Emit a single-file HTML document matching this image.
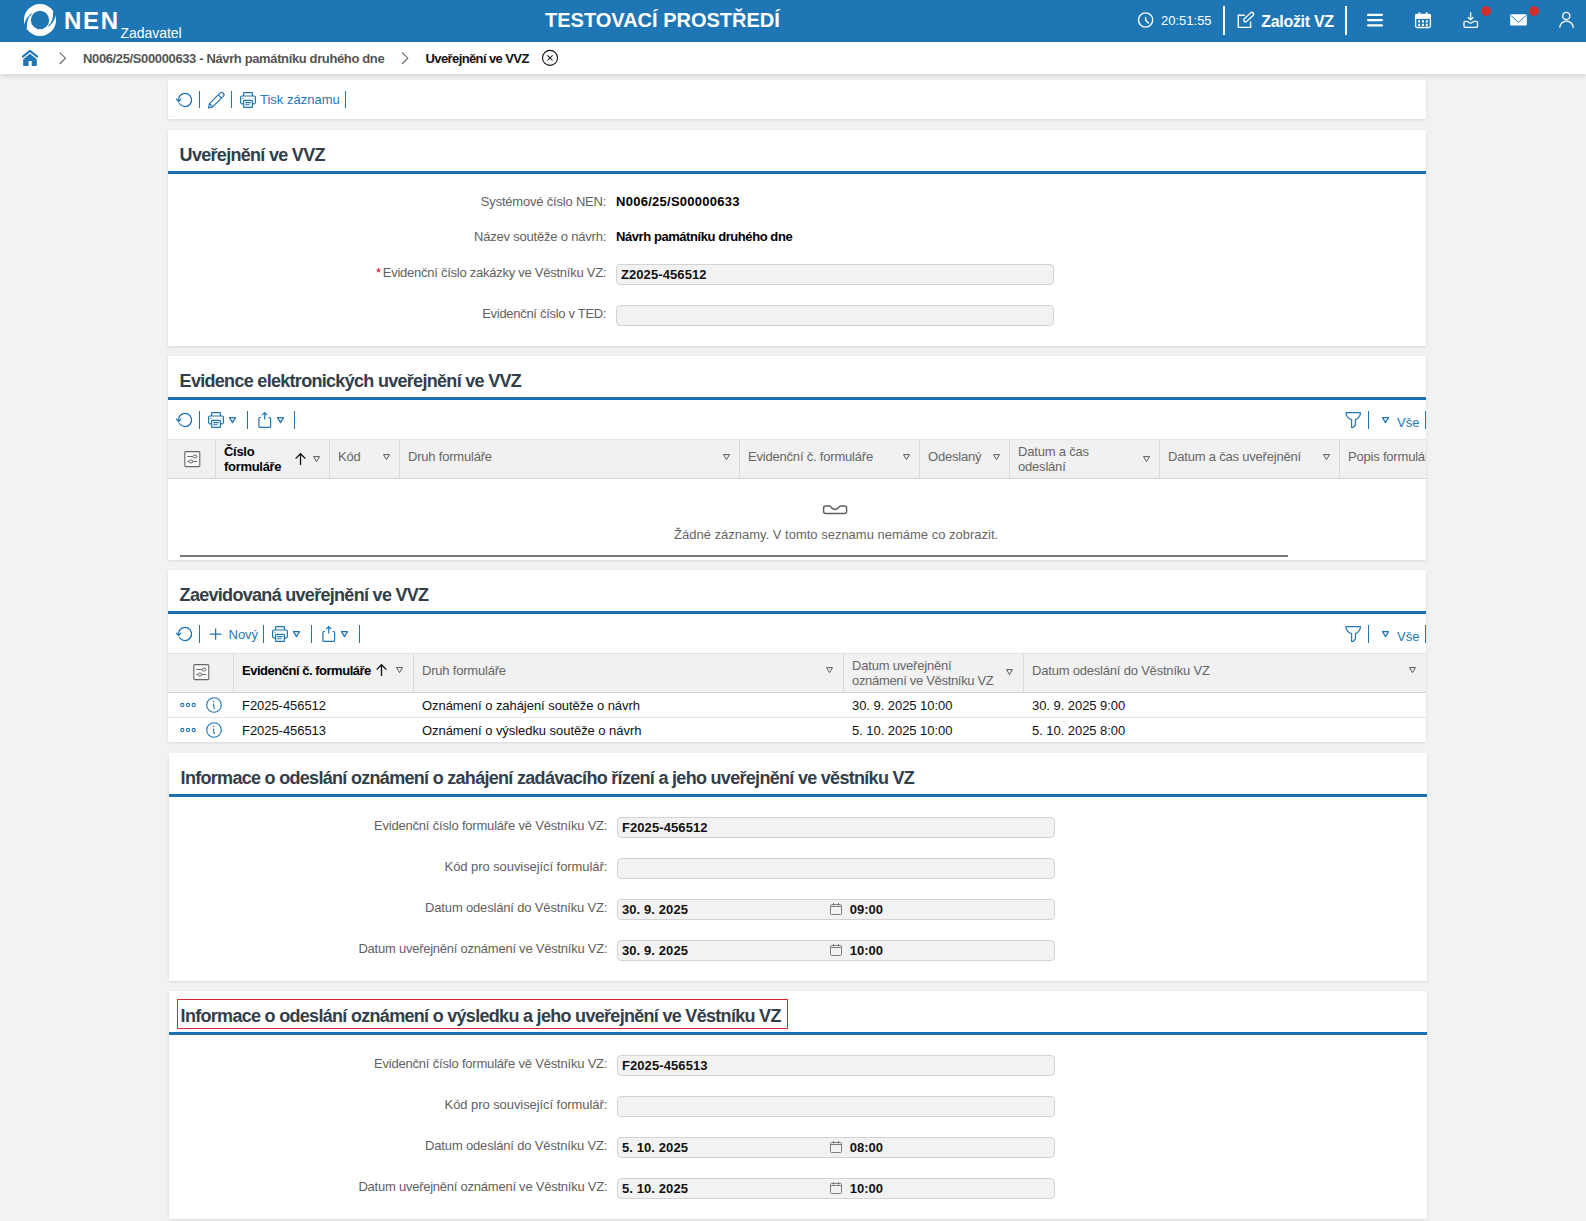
<!DOCTYPE html><html><head><meta charset="utf-8"><style>
*{box-sizing:border-box}
html,body{margin:0;padding:0}
body{width:1586px;height:1221px;overflow:hidden;background:#f2f2f2;font-family:"Liberation Sans",sans-serif;position:relative;color:#000}
.a{position:absolute}
.t{position:absolute;white-space:nowrap;line-height:1}
svg{position:absolute;overflow:visible}
.card{position:absolute;background:#fff;box-shadow:0 1px 3px rgba(0,0,0,.11)}
.sep{position:absolute;width:1px;background:#1f76b4}
</style></head><body>
<div class="a" style="left:0;top:0;width:1586px;height:42px;background:#1f76b4"></div>
<svg style="left:20px;top:0px" width="40" height="40" viewBox="20 0 40 40" ><circle cx="40" cy="20" r="12.6" fill="none" stroke="#fff" stroke-width="6.9"/>
<path d="M24.3,24.6 Q26.2,16.5 32.1,13.3 L31.9,14.3 Q26.4,18.2 26.9,28.6 L22.6,28.3 Z" fill="#1f76b4"/>
<path d="M55.7,15.4 Q53.8,23.5 47.9,26.7 L48.1,25.7 Q53.6,21.8 53.1,11.4 L57.4,11.7 Z" fill="#1f76b4"/></svg>
<div class="t" style="left:64px;top:8.68px;font-size:24px;font-weight:bold;color:#fff;letter-spacing:1.7px">NEN</div>
<div class="t" style="left:120.5px;top:25.95px;font-size:14px;color:#fff;letter-spacing:-0.05px">Zadavatel</div>
<div class="t" style="left:545px;top:10.07px;font-size:20px;font-weight:bold;color:#fff">TESTOVACÍ PROSTŘEDÍ</div>
<svg style="left:1136px;top:11px" width="20" height="20" viewBox="1136 11 20 20" ><circle cx="1145.6" cy="20" r="7.1" fill="none" stroke="#fff" stroke-width="1.4"/>
<path d="M1145.6,17 V20 L1148.8,23.4" fill="none" stroke="#fff" stroke-width="1.4"/></svg>
<div class="t" style="left:1161px;top:14.20px;font-size:13px;color:#fff">20:51:55</div>
<div class="a" style="left:1223px;top:6px;width:2px;height:29px;background:#fff"></div>
<svg style="left:1236px;top:11px" width="20" height="20" viewBox="1236 11 20 20" ><path d="M1244.9,15.3 H1238.3 V27.4 H1250.6 V21.4" fill="none" stroke="#fff" stroke-width="1.4"/>
<rect x="1242.6" y="15.3" width="12.2" height="3.6" rx="1.8" transform="rotate(-43 1248.7 17.1)" fill="none" stroke="#fff" stroke-width="1.3"/></svg>
<div class="t" style="left:1261.2px;top:13.66px;font-size:16px;font-weight:bold;color:#fff;letter-spacing:-0.3px">Založit VZ</div>
<div class="a" style="left:1345px;top:6px;width:2px;height:29px;background:#fff"></div>
<svg style="left:1366px;top:12px" width="18" height="16" viewBox="1366 12 18 16" ><path d="M1368.2,14.9 H1381.8 M1368.2,20.1 H1381.8 M1368.2,25.4 H1381.8" stroke="#fff" stroke-width="2.4" stroke-linecap="round"/></svg>
<svg style="left:1414px;top:11px" width="18" height="18" viewBox="1414 11 18 18" ><rect x="1415.6" y="14.3" width="14.8" height="13.2" rx="1.5" fill="none" stroke="#fff" stroke-width="1.3"/>
<rect x="1415.6" y="14.3" width="14.8" height="4.6" fill="#fff"/>
<path d="M1419.4,12.2 V15.5 M1426.6,12.2 V15.5" stroke="#fff" stroke-width="1.5"/>
<path d="M1418.2,20.2 h2 v2.2 h-2z M1422,20.2 h2 v2.2 h-2z M1425.8,20.2 h2 v2.2 h-2z M1418.2,23.8 h2 v2.2 h-2z M1422,23.8 h2 v2.2 h-2z M1425.8,23.8 h2 v2.2 h-2z" fill="#fff"/></svg>
<svg style="left:1460px;top:10px" width="20" height="20" viewBox="1460 10 20 20" ><path d="M1470.6,12.2 V19.6 M1467.9,17.2 L1470.6,19.9 L1473.3,17.2" fill="none" stroke="#fff" stroke-width="1.3"/>
<path d="M1464,26.2 V22.6 Q1464,21.3 1465.3,21.3 H1466.6 Q1467.7,21.3 1468.6,22.2 Q1470.6,23.9 1472.6,22.2 Q1473.5,21.3 1474.6,21.3 H1476.2 Q1477.5,21.3 1477.5,22.6 V26.2 Q1477.5,27.3 1476.4,27.3 H1465.1 Q1464,27.3 1464,26.2 Z" fill="none" stroke="#fff" stroke-width="1.3"/></svg>
<div class="a" style="left:1481px;top:6px;width:10px;height:10px;border-radius:50%;background:#d22f2c"></div>
<svg style="left:1508px;top:12px" width="20" height="16" viewBox="1508 12 20 16" ><rect x="1510.2" y="14.2" width="16.6" height="11.4" rx="1.2" fill="#fff"/>
<path d="M1510.8,15.4 L1518.5,22.3 L1526.2,15.4" fill="none" stroke="#1f76b4" stroke-width="0.95"/></svg>
<div class="a" style="left:1529px;top:6px;width:10px;height:10px;border-radius:50%;background:#d22f2c"></div>
<svg style="left:1556px;top:10px" width="20" height="20" viewBox="1556 10 20 20" ><circle cx="1566.3" cy="15.9" r="3.6" fill="none" stroke="#fff" stroke-width="1.3"/>
<path d="M1559.8,27.8 A6.7,6.7 0 0 1 1573.2,27.8" fill="none" stroke="#fff" stroke-width="1.3"/></svg>
<div class="a" style="left:0;top:42px;width:1586px;height:32px;background:#fff;box-shadow:0 2px 5px rgba(0,0,0,.13)"></div>
<svg style="left:20px;top:48px" width="20" height="20" viewBox="20 48 20 20" ><path d="M22.8,56.6 L30,50.9 L37.2,56.6" fill="none" stroke="#1f76b4" stroke-width="2" stroke-linecap="round" stroke-linejoin="round"/>
<path d="M23.2,59.2 L30,53.8 L36.8,59.2 V66 H31.7 V61 H28.6 V66 H23.2 Z" fill="#1f76b4"/></svg>
<svg style="left:57px;top:50px" width="12" height="16" viewBox="57 50 12 16" ><path d="M59.6,52.3 L65.4,58.2 L59.6,64" fill="none" stroke="#666" stroke-width="1.1"/></svg>
<div class="t" style="left:83px;top:51.70px;font-size:13px;font-weight:bold;color:#555;letter-spacing:-0.37px">N006/25/S00000633 - Návrh památníku druhého dne</div>
<svg style="left:399px;top:50px" width="12" height="16" viewBox="399 50 12 16" ><path d="M402,52.3 L407.8,58.2 L402,64" fill="none" stroke="#666" stroke-width="1.1"/></svg>
<div class="t" style="left:425.5px;top:51.70px;font-size:13px;font-weight:bold;color:#111;letter-spacing:-0.6px">Uveřejnění ve VVZ</div>
<svg style="left:540px;top:49px" width="20" height="20" viewBox="540 49 20 20" ><circle cx="550" cy="57.9" r="7.5" fill="none" stroke="#111" stroke-width="1.1"/>
<path d="M547.4,55.3 L552.6,60.5 M552.6,55.3 L547.4,60.5" stroke="#111" stroke-width="1.05"/></svg>
<div class="card" style="left:168px;top:80px;width:1258px;height:39px"></div>
<svg style="left:174.8px;top:90px" width="20" height="20" viewBox="174.8 90 20 20" ><path d="M178.20,99.40 A6.6,6.6 0 1 1 179.20,103.50" fill="none" stroke="#1f76b4" stroke-width="1.3" stroke-linecap="round"/>
<path d="M176.20,99.10 L178.40,101.50 L180.60,99.10" fill="none" stroke="#1f76b4" stroke-width="1.3" stroke-linecap="round" stroke-linejoin="round"/></svg>
<div class="sep" style="left:199px;top:91px;height:17px"></div>
<svg style="left:206px;top:90px" width="20" height="20" viewBox="206 90 20 20" ><path d="M208.5,107.8 L209.42,103.62 L219.95,93.09 A2.3,2.3 0 0 1 223.2,96.35 L212.68,106.88 Z M209.42,103.62 L212.68,106.88 M218.18,94.86 L221.44,98.11" fill="none" stroke="#1f76b4" stroke-width="1.2" stroke-linejoin="round"/></svg>
<div class="sep" style="left:231px;top:91px;height:17px"></div>
<svg style="left:238px;top:90px" width="20" height="20" viewBox="238 90 20 20" ><path d="M243.6,96 V93.3 Q243.6,92.6 244.3,92.6 H251.7 Q252.4,92.6 252.4,93.3 V96" fill="none" stroke="#1f76b4" stroke-width="1.2"/>
<path d="M243.4,103.8 H241.8 Q240.6,103.8 240.6,102.6 V97.2 Q240.6,96 241.8,96 H254.2 Q255.4,96 255.4,97.2 V102.6 Q255.4,103.8 254.2,103.8 H252.6" fill="none" stroke="#1f76b4" stroke-width="1.2"/>
<rect x="243.6" y="100.4" width="8.8" height="7" rx="0.6" fill="none" stroke="#1f76b4" stroke-width="1.2"/>
<path d="M245.2,102.6 H250.8 M245.2,104.8 H249.6 M242.2,98.2 H243.4" stroke="#1f76b4" stroke-width="1.1"/></svg>
<div class="t" style="left:260px;top:93.00px;font-size:13px;color:#1f76b4">Tisk záznamu</div>
<div class="sep" style="left:345px;top:91px;height:17px"></div>
<div class="card" style="left:168px;top:130px;width:1258px;height:216px"></div>
<div class="t" style="left:179.6px;top:146.06px;font-size:18px;font-weight:bold;color:#323e4a;letter-spacing:-0.7px">Uveřejnění ve VVZ</div>
<div class="a" style="left:168px;top:171px;width:1258px;height:3px;background:#1a70b2"></div>
<div class="t" style="left:0;width:606.2px;text-align:right;top:195.00px;font-size:13px;color:#5f5f5f;letter-spacing:-0.2px">Systémové číslo NEN:</div>
<div class="t" style="left:616px;top:195.00px;font-size:13px;font-weight:bold;letter-spacing:0.27px">N006/25/S00000633</div>
<div class="t" style="left:0;width:606.2px;text-align:right;top:230.00px;font-size:13px;color:#5f5f5f;letter-spacing:-0.2px">Název soutěže o návrh:</div>
<div class="t" style="left:616px;top:230.00px;font-size:13px;font-weight:bold;letter-spacing:-0.43px">Návrh památníku druhého dne</div>
<div class="t" style="left:0;width:606.2px;text-align:right;top:266.00px;font-size:13px;color:#5f5f5f;letter-spacing:-0.255px"><span style="color:#d0021b;margin-right:2px">*</span>Evidenční číslo zakázky ve Věstníku VZ:</div>
<div class="a" style="left:616px;top:264px;width:438px;height:21px;background:#f2f2f2;border:1px solid #d3d3d3;border-radius:4px"></div>
<div class="t" style="left:620.9px;top:268.00px;font-size:13px;font-weight:bold;color:#111;letter-spacing:0.1px">Z2025-456512</div>
<div class="t" style="left:0;width:606.2px;text-align:right;top:306.50px;font-size:13px;color:#5f5f5f;letter-spacing:-0.3px">Evidenční číslo v TED:</div>
<div class="a" style="left:616px;top:305px;width:438px;height:21px;background:#f2f2f2;border:1px solid #d3d3d3;border-radius:4px"></div>
<div class="card" style="left:168px;top:356px;width:1258px;height:204px"></div>
<div class="t" style="left:179.6px;top:372.06px;font-size:18px;font-weight:bold;color:#323e4a;letter-spacing:-0.7px">Evidence elektronických uveřejnění ve VVZ</div>
<div class="a" style="left:168px;top:397px;width:1258px;height:3px;background:#1a70b2"></div>
<svg style="left:174.8px;top:410px" width="20" height="20" viewBox="174.8 410 20 20" ><path d="M178.20,419.40 A6.6,6.6 0 1 1 179.20,423.50" fill="none" stroke="#1f76b4" stroke-width="1.3" stroke-linecap="round"/>
<path d="M176.20,419.10 L178.40,421.50 L180.60,419.10" fill="none" stroke="#1f76b4" stroke-width="1.3" stroke-linecap="round" stroke-linejoin="round"/></svg>
<div class="sep" style="left:199px;top:411px;height:18px"></div>
<svg style="left:206px;top:410px" width="20" height="20" viewBox="206 410 20 20" ><path d="M211.6,416 V413.3 Q211.6,412.6 212.3,412.6 H219.7 Q220.4,412.6 220.4,413.3 V416" fill="none" stroke="#1f76b4" stroke-width="1.2"/>
<path d="M211.4,423.8 H209.8 Q208.6,423.8 208.6,422.6 V417.2 Q208.6,416 209.8,416 H222.2 Q223.4,416 223.4,417.2 V422.6 Q223.4,423.8 222.2,423.8 H220.6" fill="none" stroke="#1f76b4" stroke-width="1.2"/>
<rect x="211.6" y="420.4" width="8.8" height="7" rx="0.6" fill="none" stroke="#1f76b4" stroke-width="1.2"/>
<path d="M213.2,422.6 H218.8 M213.2,424.8 H217.6 M210.2,418.2 H211.4" stroke="#1f76b4" stroke-width="1.1"/></svg>
<svg style="left:226.5px;top:415px" width="12" height="11" viewBox="226.5 415 12 11" ><path d="M229.0,417.6 H235.0 L232.0,422.6 Z" fill="none" stroke="#1f76b4" stroke-width="1.2" stroke-linejoin="round"/></svg>
<div class="sep" style="left:247px;top:411px;height:18px"></div>
<svg style="left:255.7px;top:410px" width="20" height="20" viewBox="255.7 410 20 20" ><path d="M260.7,417.5 H259.59999999999997 Q258.59999999999997,417.5 258.59999999999997,418.5 V426.4 Q258.59999999999997,427.4 259.59999999999997,427.4 H269.3 Q270.3,427.4 270.3,426.4 V418.5 Q270.3,417.5 269.3,417.5 H268.3" fill="none" stroke="#1f76b4" stroke-width="1.2"/>
<path d="M264.4,419.6 V412.8 M261.8,415.2 L264.4,412.6 L267.0,415.2" fill="none" stroke="#1f76b4" stroke-width="1.2"/></svg>
<svg style="left:274.5px;top:415px" width="12" height="11" viewBox="274.5 415 12 11" ><path d="M277.0,417.6 H283.0 L280.0,422.6 Z" fill="none" stroke="#1f76b4" stroke-width="1.2" stroke-linejoin="round"/></svg>
<div class="sep" style="left:294px;top:411px;height:18px"></div>
<svg style="left:1343px;top:409px" width="20" height="20" viewBox="1343 409 20 20" ><path d="M1345.9,412.7 H1360.4 Q1360.6,414.2 1359.6,416 Q1357.8,419.2 1355.4,419.7 V425 L1353.2,427.4 H1351.6 V419.7 Q1348.6,419.2 1346.8,416 Q1345.7,414.2 1345.9,412.7 Z" fill="none" stroke="#1f76b4" stroke-width="1.2" stroke-linejoin="round"/></svg>
<div class="sep" style="left:1368px;top:411px;height:18px"></div>
<svg style="left:1379.5px;top:415px" width="12" height="11" viewBox="1379.5 415 12 11" ><path d="M1382.0,417.6 H1388.0 L1385.0,422.6 Z" fill="none" stroke="#1f76b4" stroke-width="1.2" stroke-linejoin="round"/></svg>
<div class="t" style="left:1397px;top:415.60px;font-size:13px;color:#1f76b4">Vše</div>
<div class="sep" style="left:1425px;top:411px;height:18px"></div>
<div class="a" style="left:168px;top:439px;width:1258px;height:40px;background:#f1f1f1;border-top:1px solid #e3e3e3;border-bottom:1px solid #d5d5d5;overflow:hidden">
<div class="a" style="left:47px;top:0;width:1px;height:39px;background:#dadada"></div>
<div class="a" style="left:161px;top:0;width:1px;height:39px;background:#dadada"></div>
<div class="a" style="left:231px;top:0;width:1px;height:39px;background:#dadada"></div>
<div class="a" style="left:571px;top:0;width:1px;height:39px;background:#dadada"></div>
<div class="a" style="left:751px;top:0;width:1px;height:39px;background:#dadada"></div>
<div class="a" style="left:841px;top:0;width:1px;height:39px;background:#dadada"></div>
<div class="a" style="left:991px;top:0;width:1px;height:39px;background:#dadada"></div>
<div class="a" style="left:1171px;top:0;width:1px;height:39px;background:#dadada"></div>
</div>
<svg style="left:182px;top:449px" width="20" height="20" viewBox="182 449 20 20" ><rect x="184.8" y="451.6" width="15" height="15" rx="1.2" fill="#fafafa" stroke="#666" stroke-width="1.1"/>
<path d="M187.3,456.5 H192.9 M196.9,456.5 H197.1 M187.3,461.5 H188.9 M192.9,461.5 H197.1" stroke="#666" stroke-width="1"/>
<ellipse cx="194.9" cy="456.5" rx="2" ry="1.5" fill="none" stroke="#666" stroke-width="1"/>
<ellipse cx="190.9" cy="461.5" rx="2" ry="1.5" fill="none" stroke="#666" stroke-width="1"/></svg>
<div class="t" style="left:224px;top:445.00px;font-size:13px;font-weight:bold;letter-spacing:-0.3px">Číslo</div>
<div class="t" style="left:224px;top:460.00px;font-size:13px;font-weight:bold;letter-spacing:-0.3px">formuláře</div>
<svg style="left:293px;top:451px" width="16" height="16" viewBox="293 451 16 16" ><path d="M300.5,465 V453.8 M295.6,458.6 L300.5,453.7 L305.4,458.6" fill="none" stroke="#111" stroke-width="1.3"/></svg>
<svg style="left:310.6px;top:454px" width="12" height="11" viewBox="310.6 454 12 11" ><path d="M313.1,456.6 H319.1 L316.1,461.6 Z" fill="none" stroke="#5a5a5a" stroke-width="1.0" stroke-linejoin="round"/></svg>
<div class="t" style="left:338px;top:450.00px;font-size:13px;color:#666;letter-spacing:-0.2px">Kód</div>
<svg style="left:380.5px;top:451.5px" width="12" height="11" viewBox="380.5 451.5 12 11" ><path d="M383.0,454.1 H389.0 L386.0,459.1 Z" fill="none" stroke="#5a5a5a" stroke-width="1.0" stroke-linejoin="round"/></svg>
<div class="t" style="left:408px;top:450.00px;font-size:13px;color:#666;letter-spacing:-0.2px">Druh formuláře</div>
<svg style="left:720.8px;top:451.5px" width="12" height="11" viewBox="720.8 451.5 12 11" ><path d="M723.3,454.1 H729.3 L726.3,459.1 Z" fill="none" stroke="#5a5a5a" stroke-width="1.0" stroke-linejoin="round"/></svg>
<div class="t" style="left:748px;top:450.00px;font-size:13px;color:#666;letter-spacing:-0.2px">Evidenční č. formuláře</div>
<svg style="left:900.5px;top:451.5px" width="12" height="11" viewBox="900.5 451.5 12 11" ><path d="M903.0,454.1 H909.0 L906.0,459.1 Z" fill="none" stroke="#5a5a5a" stroke-width="1.0" stroke-linejoin="round"/></svg>
<div class="t" style="left:928px;top:450.00px;font-size:13px;color:#666;letter-spacing:-0.2px">Odeslaný</div>
<svg style="left:990.5px;top:451.5px" width="12" height="11" viewBox="990.5 451.5 12 11" ><path d="M993.0,454.1 H999.0 L996.0,459.1 Z" fill="none" stroke="#5a5a5a" stroke-width="1.0" stroke-linejoin="round"/></svg>
<div class="t" style="left:1018px;top:445.00px;font-size:13px;color:#666;letter-spacing:-0.2px">Datum a čas</div>
<div class="t" style="left:1018px;top:460.00px;font-size:13px;color:#666;letter-spacing:-0.2px">odeslání</div>
<svg style="left:1140.5px;top:454px" width="12" height="11" viewBox="1140.5 454 12 11" ><path d="M1143.0,456.6 H1149.0 L1146.0,461.6 Z" fill="none" stroke="#5a5a5a" stroke-width="1.0" stroke-linejoin="round"/></svg>
<div class="t" style="left:1168px;top:450.00px;font-size:13px;color:#666;letter-spacing:-0.2px">Datum a čas uveřejnění</div>
<svg style="left:1320.5px;top:451.5px" width="12" height="11" viewBox="1320.5 451.5 12 11" ><path d="M1323.0,454.1 H1329.0 L1326.0,459.1 Z" fill="none" stroke="#5a5a5a" stroke-width="1.0" stroke-linejoin="round"/></svg>
<div class="a" style="left:1339px;top:440px;width:87px;height:38px;overflow:hidden">
<div class="t" style="left:9px;top:10.00px;font-size:13px;color:#666;letter-spacing:-0.2px">Popis formuláře</div>
</div>
<svg style="left:820px;top:502px" width="30" height="16" viewBox="820 502 30 16" ><path d="M823.6,508 Q823.6,506 825.6,506 H829.4 Q830.4,506 831.2,507.2 Q833,509.6 835,509.6 Q837,509.6 838.8,507.2 Q839.6,506 840.6,506 H844.6 Q846.6,506 846.6,508 V511.6 Q846.6,513.6 844.6,513.6 H825.6 Q823.6,513.6 823.6,511.6 Z" fill="none" stroke="#5f5f5f" stroke-width="1.5"/></svg>
<div class="t" style="left:674px;top:528.00px;font-size:13px;color:#666">Žádné záznamy. V tomto seznamu nemáme co zobrazit.</div>
<div class="a" style="left:180px;top:555px;width:1108px;height:2px;background:#787878"></div>
<div class="card" style="left:168px;top:570px;width:1258px;height:172px"></div>
<div class="t" style="left:179.6px;top:586.06px;font-size:18px;font-weight:bold;color:#323e4a;letter-spacing:-0.7px">Zaevidovaná uveřejnění ve VVZ</div>
<div class="a" style="left:168px;top:611px;width:1258px;height:3px;background:#1a70b2"></div>
<svg style="left:174.8px;top:624px" width="20" height="20" viewBox="174.8 624 20 20" ><path d="M178.20,633.40 A6.6,6.6 0 1 1 179.20,637.50" fill="none" stroke="#1f76b4" stroke-width="1.3" stroke-linecap="round"/>
<path d="M176.20,633.10 L178.40,635.50 L180.60,633.10" fill="none" stroke="#1f76b4" stroke-width="1.3" stroke-linecap="round" stroke-linejoin="round"/></svg>
<div class="sep" style="left:199px;top:625px;height:18px"></div>
<svg style="left:207px;top:626px" width="16" height="16" viewBox="207 626 16 16" ><path d="M215.6,628.5 V639.8 M209.9,634.2 H221.3" stroke="#1f76b4" stroke-width="1.3"/></svg>
<div class="t" style="left:228.5px;top:628.00px;font-size:13px;color:#1f76b4">Nový</div>
<div class="sep" style="left:263px;top:625px;height:18px"></div>
<svg style="left:270px;top:624px" width="20" height="20" viewBox="270 624 20 20" ><path d="M275.6,630 V627.3 Q275.6,626.6 276.3,626.6 H283.7 Q284.4,626.6 284.4,627.3 V630" fill="none" stroke="#1f76b4" stroke-width="1.2"/>
<path d="M275.4,637.8 H273.8 Q272.6,637.8 272.6,636.6 V631.2 Q272.6,630 273.8,630 H286.2 Q287.4,630 287.4,631.2 V636.6 Q287.4,637.8 286.2,637.8 H284.6" fill="none" stroke="#1f76b4" stroke-width="1.2"/>
<rect x="275.6" y="634.4" width="8.8" height="7" rx="0.6" fill="none" stroke="#1f76b4" stroke-width="1.2"/>
<path d="M277.2,636.6 H282.8 M277.2,638.8 H281.6 M274.2,632.2 H275.4" stroke="#1f76b4" stroke-width="1.1"/></svg>
<svg style="left:291px;top:629px" width="12" height="11" viewBox="291 629 12 11" ><path d="M293.5,631.6 H299.5 L296.5,636.6 Z" fill="none" stroke="#1f76b4" stroke-width="1.2" stroke-linejoin="round"/></svg>
<div class="sep" style="left:311px;top:625px;height:18px"></div>
<svg style="left:319.7px;top:624px" width="20" height="20" viewBox="319.7 624 20 20" ><path d="M324.7,631.5 H323.59999999999997 Q322.59999999999997,631.5 322.59999999999997,632.5 V640.4 Q322.59999999999997,641.4 323.59999999999997,641.4 H333.3 Q334.3,641.4 334.3,640.4 V632.5 Q334.3,631.5 333.3,631.5 H332.3" fill="none" stroke="#1f76b4" stroke-width="1.2"/>
<path d="M328.4,633.6 V626.8 M325.8,629.2 L328.4,626.6 L331.0,629.2" fill="none" stroke="#1f76b4" stroke-width="1.2"/></svg>
<svg style="left:339px;top:629px" width="12" height="11" viewBox="339 629 12 11" ><path d="M341.5,631.6 H347.5 L344.5,636.6 Z" fill="none" stroke="#1f76b4" stroke-width="1.2" stroke-linejoin="round"/></svg>
<div class="sep" style="left:359px;top:625px;height:18px"></div>
<svg style="left:1343px;top:623px" width="20" height="20" viewBox="1343 623 20 20" ><path d="M1345.9,626.7 H1360.4 Q1360.6,628.2 1359.6,630 Q1357.8,633.2 1355.4,633.7 V639 L1353.2,641.4 H1351.6 V633.7 Q1348.6,633.2 1346.8,630 Q1345.7,628.2 1345.9,626.7 Z" fill="none" stroke="#1f76b4" stroke-width="1.2" stroke-linejoin="round"/></svg>
<div class="sep" style="left:1368px;top:625px;height:18px"></div>
<svg style="left:1379.5px;top:629px" width="12" height="11" viewBox="1379.5 629 12 11" ><path d="M1382.0,631.6 H1388.0 L1385.0,636.6 Z" fill="none" stroke="#1f76b4" stroke-width="1.2" stroke-linejoin="round"/></svg>
<div class="t" style="left:1397px;top:629.60px;font-size:13px;color:#1f76b4">Vše</div>
<div class="sep" style="left:1425px;top:625px;height:18px"></div>
<div class="a" style="left:168px;top:653px;width:1258px;height:40px;background:#f1f1f1;border-top:1px solid #e3e3e3;border-bottom:1px solid #d5d5d5;overflow:hidden">
<div class="a" style="left:65px;top:0;width:1px;height:39px;background:#dadada"></div>
<div class="a" style="left:245px;top:0;width:1px;height:39px;background:#dadada"></div>
<div class="a" style="left:675px;top:0;width:1px;height:39px;background:#dadada"></div>
<div class="a" style="left:855px;top:0;width:1px;height:39px;background:#dadada"></div>
</div>
<svg style="left:191px;top:662px" width="20" height="20" viewBox="191 662 20 20" ><rect x="193.8" y="664.6" width="15" height="15" rx="1.2" fill="#fafafa" stroke="#666" stroke-width="1.1"/>
<path d="M196.3,669.5 H201.9 M205.9,669.5 H206.1 M196.3,674.5 H197.9 M201.9,674.5 H206.1" stroke="#666" stroke-width="1"/>
<ellipse cx="203.9" cy="669.5" rx="2" ry="1.5" fill="none" stroke="#666" stroke-width="1"/>
<ellipse cx="199.9" cy="674.5" rx="2" ry="1.5" fill="none" stroke="#666" stroke-width="1"/></svg>
<div class="t" style="left:242px;top:664.00px;font-size:13px;font-weight:bold;letter-spacing:-0.48px">Evidenční č. formuláře</div>
<svg style="left:373.6px;top:662px" width="16" height="16" viewBox="373.6 662 16 16" ><path d="M381.1,676 V664.8 M376.20000000000005,669.6 L381.1,664.7 L386.0,669.6" fill="none" stroke="#111" stroke-width="1.3"/></svg>
<svg style="left:394.4px;top:665px" width="12" height="11" viewBox="394.4 665 12 11" ><path d="M396.9,667.6 H402.9 L399.9,672.6 Z" fill="none" stroke="#5a5a5a" stroke-width="1.0" stroke-linejoin="round"/></svg>
<div class="t" style="left:422px;top:664.00px;font-size:13px;color:#666;letter-spacing:-0.2px">Druh formuláře</div>
<svg style="left:824px;top:665px" width="12" height="11" viewBox="824 665 12 11" ><path d="M826.5,667.6 H832.5 L829.5,672.6 Z" fill="none" stroke="#5a5a5a" stroke-width="1.0" stroke-linejoin="round"/></svg>
<div class="t" style="left:852px;top:658.50px;font-size:13px;color:#666;letter-spacing:-0.2px">Datum uveřejnění</div>
<div class="t" style="left:852px;top:673.50px;font-size:13px;color:#666;letter-spacing:-0.32px">oznámení ve Věstníku VZ</div>
<svg style="left:1004px;top:667px" width="12" height="11" viewBox="1004 667 12 11" ><path d="M1006.5,669.6 H1012.5 L1009.5,674.6 Z" fill="none" stroke="#5a5a5a" stroke-width="1.0" stroke-linejoin="round"/></svg>
<div class="t" style="left:1032px;top:664.00px;font-size:13px;color:#666;letter-spacing:-0.2px">Datum odeslání do Věstníku VZ</div>
<svg style="left:1406.6px;top:665px" width="12" height="11" viewBox="1406.6 665 12 11" ><path d="M1409.1,667.6 H1415.1 L1412.1,672.6 Z" fill="none" stroke="#5a5a5a" stroke-width="1.0" stroke-linejoin="round"/></svg>
<div class="a" style="left:168px;top:717px;width:1258px;height:1px;background:#e4e4e4"></div>
<svg style="left:176px;top:701px" width="24" height="8" viewBox="176 701 24 8" ><circle cx="182.3" cy="705" r="1.6" fill="none" stroke="#1f76b4" stroke-width="1.1"/><circle cx="188" cy="705" r="1.6" fill="none" stroke="#1f76b4" stroke-width="1.1"/><circle cx="193.7" cy="705" r="1.6" fill="none" stroke="#1f76b4" stroke-width="1.1"/></svg>
<svg style="left:205px;top:696px" width="18" height="18" viewBox="205 696 18 18" ><circle cx="214" cy="705" r="7.3" fill="none" stroke="#1f76b4" stroke-width="1.1"/><circle cx="213.7" cy="701.4" r="0.75" fill="#1f76b4"/><path d="M213.4,703.5 L213.9,707.6 Q214.1,708.4 214.9,708.6" fill="none" stroke="#1f76b4" stroke-width="1.1"/></svg>
<div class="t" style="left:242px;top:699.00px;font-size:13px;color:#111;letter-spacing:-0.05px">F2025-456512</div>
<div class="t" style="left:422px;top:699.00px;font-size:13px;color:#111;letter-spacing:-0.05px">Oznámení o zahájení soutěže o návrh</div>
<div class="t" style="left:852px;top:699.00px;font-size:13px;color:#111;letter-spacing:-0.05px">30. 9. 2025 10:00</div>
<div class="t" style="left:1032px;top:699.00px;font-size:13px;color:#111;letter-spacing:-0.05px">30. 9. 2025 9:00</div>
<svg style="left:176px;top:726px" width="24" height="8" viewBox="176 726 24 8" ><circle cx="182.3" cy="730" r="1.6" fill="none" stroke="#1f76b4" stroke-width="1.1"/><circle cx="188" cy="730" r="1.6" fill="none" stroke="#1f76b4" stroke-width="1.1"/><circle cx="193.7" cy="730" r="1.6" fill="none" stroke="#1f76b4" stroke-width="1.1"/></svg>
<svg style="left:205px;top:721px" width="18" height="18" viewBox="205 721 18 18" ><circle cx="214" cy="730" r="7.3" fill="none" stroke="#1f76b4" stroke-width="1.1"/><circle cx="213.7" cy="726.4" r="0.75" fill="#1f76b4"/><path d="M213.4,728.5 L213.9,732.6 Q214.1,733.4 214.9,733.6" fill="none" stroke="#1f76b4" stroke-width="1.1"/></svg>
<div class="t" style="left:242px;top:724.00px;font-size:13px;color:#111;letter-spacing:-0.05px">F2025-456513</div>
<div class="t" style="left:422px;top:724.00px;font-size:13px;color:#111;letter-spacing:-0.05px">Oznámení o výsledku soutěže o návrh</div>
<div class="t" style="left:852px;top:724.00px;font-size:13px;color:#111;letter-spacing:-0.05px">5. 10. 2025 10:00</div>
<div class="t" style="left:1032px;top:724.00px;font-size:13px;color:#111;letter-spacing:-0.05px">5. 10. 2025 8:00</div>
<div class="card" style="left:169px;top:753px;width:1258px;height:228px"></div>
<div class="t" style="left:180.6px;top:769.06px;font-size:18px;font-weight:bold;color:#323e4a;letter-spacing:-0.7px">Informace o odeslání oznámení o zahájení zadávacího řízení a jeho uveřejnění ve věstníku VZ</div>
<div class="a" style="left:169px;top:794px;width:1258px;height:3px;background:#1a70b2"></div>
<div class="t" style="left:0;width:607.3px;text-align:right;top:819.20px;font-size:13px;color:#5f5f5f;letter-spacing:-0.195px">Evidenční číslo formuláře vě Věstníku VZ:</div>
<div class="a" style="left:617px;top:817px;width:438px;height:21px;background:#f2f2f2;border:1px solid #d3d3d3;border-radius:4px"></div>
<div class="t" style="left:621.9px;top:821.00px;font-size:13px;font-weight:bold;color:#111;letter-spacing:0.1px">F2025-456512</div>
<div class="t" style="left:0;width:607.3px;text-align:right;top:860.20px;font-size:13px;color:#5f5f5f;letter-spacing:-0.07px">Kód pro související formulář:</div>
<div class="a" style="left:617px;top:858px;width:438px;height:21px;background:#f2f2f2;border:1px solid #d3d3d3;border-radius:4px"></div>
<div class="t" style="left:0;width:607.3px;text-align:right;top:901.20px;font-size:13px;color:#5f5f5f;letter-spacing:-0.165px">Datum odeslání do Věstníku VZ:</div>
<div class="a" style="left:617px;top:899px;width:438px;height:21px;background:#f2f2f2;border:1px solid #d3d3d3;border-radius:4px"></div>
<div class="t" style="left:621.9px;top:903.00px;font-size:13px;font-weight:bold;color:#111;letter-spacing:0.1px">30. 9. 2025</div>
<svg style="left:828px;top:900px" width="16" height="16" viewBox="828 900 16 16" ><rect x="830.5" y="904.5" width="11" height="10" rx="1" fill="none" stroke="#7d7d7d" stroke-width="1"/>
<path d="M830.5,906.5 H841.5 M833.5,903 V905.5 M838.5,903 V905.5" stroke="#7d7d7d" stroke-width="1"/></svg>
<div class="t" style="left:849.8px;top:903.00px;font-size:13px;font-weight:bold;color:#111;letter-spacing:0.0px">09:00</div>
<div class="t" style="left:0;width:607.3px;text-align:right;top:942.20px;font-size:13px;color:#5f5f5f;letter-spacing:-0.24px">Datum uveřejnění oznámení ve Věstníku VZ:</div>
<div class="a" style="left:617px;top:940px;width:438px;height:21px;background:#f2f2f2;border:1px solid #d3d3d3;border-radius:4px"></div>
<div class="t" style="left:621.9px;top:944.00px;font-size:13px;font-weight:bold;color:#111;letter-spacing:0.1px">30. 9. 2025</div>
<svg style="left:828px;top:941px" width="16" height="16" viewBox="828 941 16 16" ><rect x="830.5" y="945.5" width="11" height="10" rx="1" fill="none" stroke="#7d7d7d" stroke-width="1"/>
<path d="M830.5,947.5 H841.5 M833.5,944 V946.5 M838.5,944 V946.5" stroke="#7d7d7d" stroke-width="1"/></svg>
<div class="t" style="left:849.8px;top:944.00px;font-size:13px;font-weight:bold;color:#111;letter-spacing:0.0px">10:00</div>
<div class="card" style="left:169px;top:991px;width:1258px;height:228px"></div>
<div class="t" style="left:180.6px;top:1007.06px;font-size:18px;font-weight:bold;color:#323e4a;letter-spacing:-0.7px">Informace o odeslání oznámení o výsledku a jeho uveřejnění ve Věstníku VZ</div>
<div class="a" style="left:169px;top:1032px;width:1258px;height:3px;background:#1a70b2"></div>
<div class="a" style="left:177px;top:999px;width:611px;height:30px;border:1px solid #e0242f"></div>
<div class="t" style="left:0;width:607.3px;text-align:right;top:1057.20px;font-size:13px;color:#5f5f5f;letter-spacing:-0.195px">Evidenční číslo formuláře vě Věstníku VZ:</div>
<div class="a" style="left:617px;top:1055px;width:438px;height:21px;background:#f2f2f2;border:1px solid #d3d3d3;border-radius:4px"></div>
<div class="t" style="left:621.9px;top:1059.00px;font-size:13px;font-weight:bold;color:#111;letter-spacing:0.1px">F2025-456513</div>
<div class="t" style="left:0;width:607.3px;text-align:right;top:1098.20px;font-size:13px;color:#5f5f5f;letter-spacing:-0.07px">Kód pro související formulář:</div>
<div class="a" style="left:617px;top:1096px;width:438px;height:21px;background:#f2f2f2;border:1px solid #d3d3d3;border-radius:4px"></div>
<div class="t" style="left:0;width:607.3px;text-align:right;top:1139.20px;font-size:13px;color:#5f5f5f;letter-spacing:-0.165px">Datum odeslání do Věstníku VZ:</div>
<div class="a" style="left:617px;top:1137px;width:438px;height:21px;background:#f2f2f2;border:1px solid #d3d3d3;border-radius:4px"></div>
<div class="t" style="left:621.9px;top:1141.00px;font-size:13px;font-weight:bold;color:#111;letter-spacing:0.1px">5. 10. 2025</div>
<svg style="left:828px;top:1138px" width="16" height="16" viewBox="828 1138 16 16" ><rect x="830.5" y="1142.5" width="11" height="10" rx="1" fill="none" stroke="#7d7d7d" stroke-width="1"/>
<path d="M830.5,1144.5 H841.5 M833.5,1141 V1143.5 M838.5,1141 V1143.5" stroke="#7d7d7d" stroke-width="1"/></svg>
<div class="t" style="left:849.8px;top:1141.00px;font-size:13px;font-weight:bold;color:#111;letter-spacing:0.0px">08:00</div>
<div class="t" style="left:0;width:607.3px;text-align:right;top:1180.20px;font-size:13px;color:#5f5f5f;letter-spacing:-0.24px">Datum uveřejnění oznámení ve Věstníku VZ:</div>
<div class="a" style="left:617px;top:1178px;width:438px;height:21px;background:#f2f2f2;border:1px solid #d3d3d3;border-radius:4px"></div>
<div class="t" style="left:621.9px;top:1182.00px;font-size:13px;font-weight:bold;color:#111;letter-spacing:0.1px">5. 10. 2025</div>
<svg style="left:828px;top:1179px" width="16" height="16" viewBox="828 1179 16 16" ><rect x="830.5" y="1183.5" width="11" height="10" rx="1" fill="none" stroke="#7d7d7d" stroke-width="1"/>
<path d="M830.5,1185.5 H841.5 M833.5,1182 V1184.5 M838.5,1182 V1184.5" stroke="#7d7d7d" stroke-width="1"/></svg>
<div class="t" style="left:849.8px;top:1182.00px;font-size:13px;font-weight:bold;color:#111;letter-spacing:0.0px">10:00</div>
</body></html>
